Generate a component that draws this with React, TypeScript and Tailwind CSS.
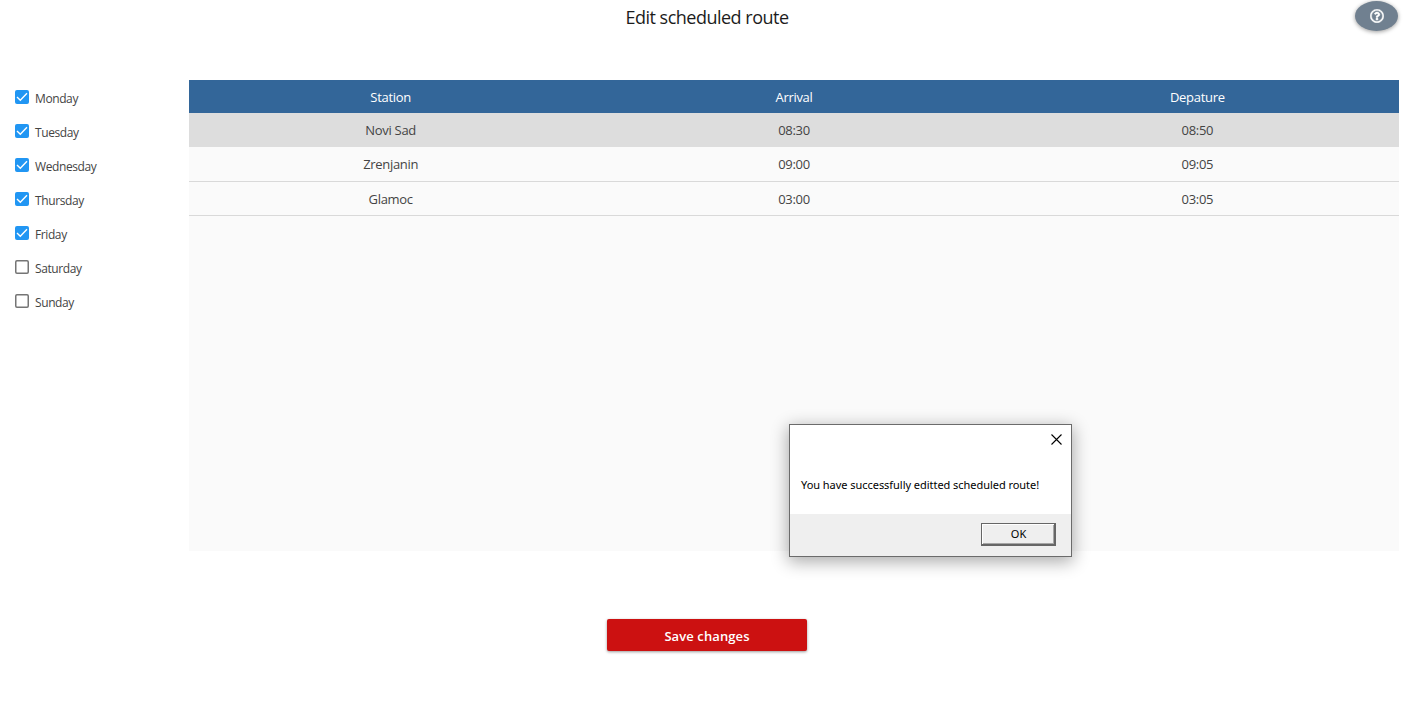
import { useState } from "react";
import { FaRegQuestionCircle } from "react-icons/fa";

const DAYS = ["Monday", "Tuesday", "Wednesday", "Thursday", "Friday", "Saturday", "Sunday"];

const STOPS = [
  { station: "Novi Sad", arrival: "08:30", departure: "08:50", row: "h-[34px] bg-[#dddddd]" },
  { station: "Zrenjanin", arrival: "09:00", departure: "09:05", row: "h-[35px] border-b border-[#d9d9d9]" },
  { station: "Glamoc", arrival: "03:00", departure: "03:05", row: "h-[34px] border-b border-[#d9d9d9]" },
];

function DayCheckbox({ label, checked, onToggle }: { label: string; checked: boolean; onToggle: () => void }) {
  return (
    <button
      type="button"
      role="checkbox"
      aria-checked={checked}
      onClick={onToggle}
      className="flex h-[34px] items-start gap-1.5 text-left"
    >
      {checked ? (
        <span className="flex size-3.5 rounded-[2px] bg-[#2196f3]">
          <svg viewBox="0 0 14 14" className="size-3.5" fill="none" stroke="white" strokeWidth="1.4">
            <path d="M2 7 5.3 10.2 12 3.3" />
          </svg>
        </span>
      ) : (
        <span className="flex size-3.5">
          <svg viewBox="0 0 14 14" className="size-3.5" fill="white" stroke="#757575" strokeWidth="1.5">
            <rect x=".75" y=".75" width="12.5" height="12.5" rx="1.2" />
          </svg>
        </span>
      )}
      <span className="text-[12px] leading-[18px] tracking-[-0.4px] text-[#444444]">{label}</span>
    </button>
  );
}

function MessageDialog({ onClose }: { onClose: () => void }) {
  return (
    <div
      role="dialog"
      className="absolute left-[789px] top-[424px] flex h-[133px] w-[283px] flex-col border border-[#6b6b6b] bg-white font-['Noto_Sans',sans-serif] text-[11px] tracking-[-0.04px] text-black shadow-[0_4px_16px_1px_rgba(0,0,0,0.33)]"
    >
      <div className="flex h-7 justify-end pr-[9px] pt-[9px]">
        <button type="button" aria-label="Close" onClick={onClose} className="size-[11px]">
          <svg viewBox="0 0 11 11" className="size-[11px]" stroke="black" strokeWidth="1.1">
            <path d="M.5.5l10 10M10.5.5l-10 10" />
          </svg>
        </button>
      </div>
      <p className="flex-1 whitespace-nowrap pl-[11px] pt-6 leading-4">You have successfully editted scheduled route!</p>
      <div className="flex h-[42px] justify-end bg-[#efefef] pr-[15px] pt-[9px]">
        <button
          type="button"
          onClick={onClose}
          className="h-[23px] w-[75px] border border-b-2 border-r-2 border-[#666666] bg-[#efefef] pl-px leading-5 shadow-[inset_1px_1px_0_#ffffff,inset_-1px_-1px_0_#a6a6a6]"
        >
          OK
        </button>
      </div>
    </div>
  );
}

export default function App() {
  const [days, setDays] = useState([true, true, true, true, true, false, false]);
  const [dialogOpen, setDialogOpen] = useState(true);

  return (
    <div className="relative flex h-[720px] w-[1415px] flex-col overflow-hidden bg-white font-['Open_Sans','Noto_Sans',sans-serif]">
      <header className="grid h-20 grid-cols-[1fr_auto_1fr] items-start pr-[17px]">
        <span />
        <h1 className="translate-x-[8px] pt-1 text-[18px] leading-[26px] tracking-[-0.5px] text-[#1c1c1c]">
          Edit scheduled route
        </h1>
        <button
          type="button"
          aria-label="Help"
          className="mt-px flex h-[30px] w-[43px] items-center justify-center justify-self-end rounded-[50%] bg-[#708090] text-white shadow-[0_1px_4px_rgba(0,0,0,0.4)]"
        >
          <FaRegQuestionCircle size={14} stroke="white" strokeWidth={16} />
        </button>
      </header>

      <main className="flex h-[471px] pr-4">
        <div className="flex w-[189px] flex-col pl-[15px] pt-2.5">
          {DAYS.map((day, i) => (
            <DayCheckbox
              key={day}
              label={day}
              checked={days[i]}
              onToggle={() => setDays(days.map((on, j) => (j === i ? !on : on)))}
            />
          ))}
        </div>
        <div className="flex-1 bg-[#fafafa] text-center text-[13px] tracking-[-0.3px] text-[#444444]">
          <div className="grid h-[33px] grid-cols-3 items-center bg-[#336699] pt-[3px] text-white">
            <span>Station</span>
            <span>Arrival</span>
            <span>Depature</span>
          </div>
          {STOPS.map((stop) => (
            <div key={stop.station} className={`grid grid-cols-3 items-center pt-0.5 ${stop.row}`}>
              <span>{stop.station}</span>
              <span>{stop.arrival}</span>
              <span>{stop.departure}</span>
            </div>
          ))}
        </div>
      </main>

      <div className="flex pl-[607px] pt-[68px]">
        <button
          type="button"
          onClick={() => setDialogOpen(true)}
          className="h-8 w-[200px] rounded-[2px] bg-[#cc1111] pt-[3px] text-[13px] font-semibold tracking-[0.1px] text-white shadow-[0_1px_3px_rgba(0,0,0,0.4)]"
        >
          Save changes
        </button>
      </div>

      {dialogOpen && <MessageDialog onClose={() => setDialogOpen(false)} />}
    </div>
  );
}
